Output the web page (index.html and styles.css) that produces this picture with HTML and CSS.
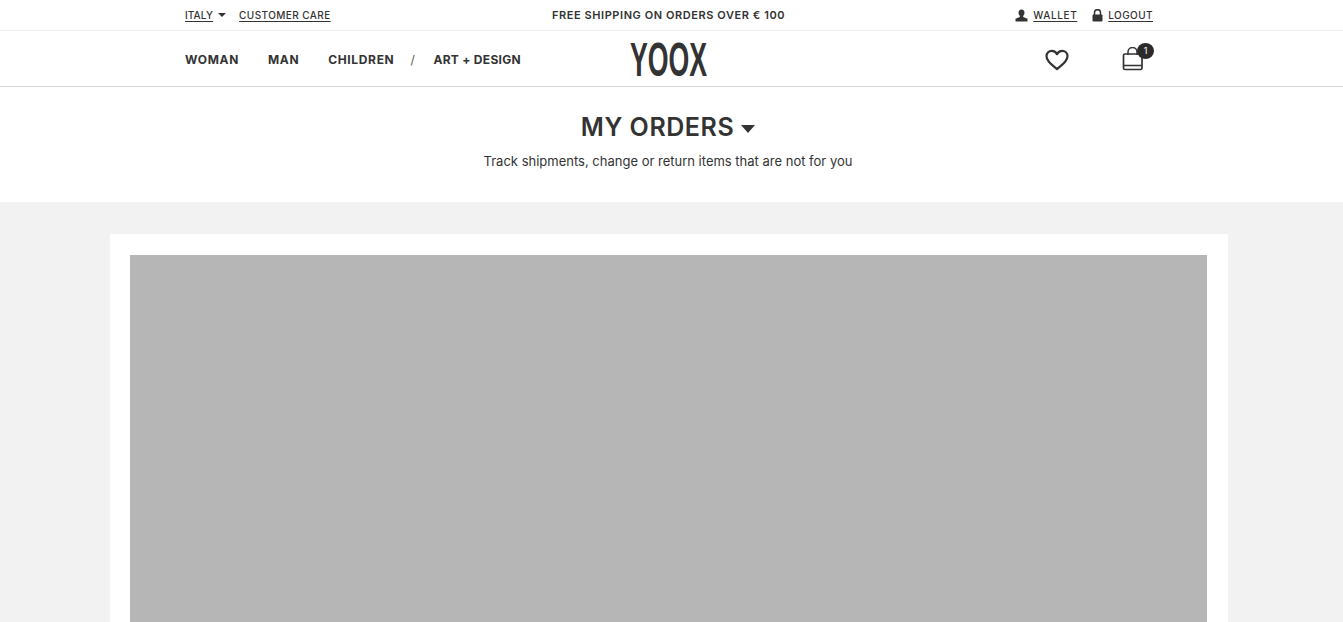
FILE: index.html
```html
<!DOCTYPE html>
<html lang="en">
<head>
<meta charset="utf-8">
<title>My Orders - YOOX</title>
<link rel="stylesheet" href="styles.css">
</head>
<body>
<div class="page">
<header class="site-header">
  <div class="top-bar">
    <div class="wrap top-inner">
      <div class="top-left">
        <a class="top-link" href="#">ITALY</a>
        <span class="caret-small"></span>
        <a class="top-link care" href="#">CUSTOMER CARE</a>
      </div>
      <div class="promo">FREE SHIPPING ON ORDERS OVER € 100</div>
      <div class="top-right">
        <svg class="mini-icon" width="13" height="13" viewBox="0 0 13 13"><path d="M6.500 0.500c-2 0-3 1.400-3 3.200 0 1.400.6 2.500 1.300 3.100v1.200L0.500 9.800V12.500h12V9.800L8.200 8V6.800c.7-.6 1.300-1.700 1.300-3.100 0-1.800-1-3.200-3-3.200z" fill="#333"/></svg>
        <a class="top-link wallet" href="#">WALLET</a>
        <svg class="mini-icon lock" width="11" height="13" viewBox="0 0 11 13"><path d="M2.500 6V3.700a3 3 0 0 1 6 0V6" fill="none" stroke="#333" stroke-width="1.500"/><rect x="0.500" y="5.500" width="10" height="7" rx="1" fill="#333"/></svg>
        <a class="top-link logout" href="#">LOGOUT</a>
      </div>
    </div>
  </div>
  <div class="main-bar">
    <div class="wrap main-inner">
      <nav class="main-nav">
        <a href="#">WOMAN</a>
        <a href="#">MAN</a>
        <a href="#">CHILDREN</a>
        <span class="slash">/</span>
        <a class="nav-art" href="#">ART + DESIGN</a>
      </nav>
      <a class="logo" href="#"><span class="logo-text">YOOX</span></a>
      <div class="main-icons">
        <svg class="heart" width="24" height="22" viewBox="0 0 24 22"><path d="M12 20.200C7 15.800 1.500 12.300 1.500 7.200 1.500 4 4 1.800 6.800 1.800 9 1.800 11 3 12 5.200 13 3 15 1.800 17.200 1.800 20 1.800 22.500 4 22.500 7.200 22.500 12.300 17 15.800 12 20.200z" fill="none" stroke="#333" stroke-width="2.200" stroke-linejoin="round"/></svg>
        <div class="bag">
          <svg width="21" height="24" viewBox="0 0 21 24"><path d="M6 8V5a4.500 4.500 0 0 1 9 0v3" fill="none" stroke="#333" stroke-width="1.500"/><rect x="1.500" y="7" width="18.500" height="15.500" rx="1.500" fill="none" stroke="#333" stroke-width="1.700"/><path d="M1.500 18.500h18.500" stroke="#333" stroke-width="1.500"/></svg>
          <span class="badge">1</span>
        </div>
      </div>
    </div>
  </div>
</header>
<section class="hero">
  <h1 class="hero-title">MY ORDERS <span class="caret-big"></span></h1>
  <p class="hero-sub">Track shipments, change or return items that are not for you</p>
</section>
<main class="content">
  <div class="card">
    <div class="placeholder"></div>
  </div>
</main>
</div>
</body>
</html>
```

FILE: styles.css
```css
* { box-sizing: border-box; }
html, body { margin: 0; height: 100%; overflow: hidden; }
body { background: #f2f2f2; font-family: Inter, "Liberation Sans", sans-serif; color: #333; }
a { color: inherit; text-decoration: none; }
.page { width: 1338px; }
.site-header, .hero { background: #fff; width: 1343px; }
.wrap { width: 968px; margin-left: 185px; }

.top-bar { height: 31px; border-bottom: 1px solid #f1f1f1; }
.top-inner { position: relative; display: flex; align-items: center; justify-content: space-between; height: 30px; }
.top-left, .top-right { display: flex; align-items: center; font-size: 10px; font-weight: 500; }
.top-link { text-decoration: underline; text-underline-offset: 2px; letter-spacing: 0.1px; }
.caret-small { width: 0; height: 0; margin: 0 5px; border-left: 4px solid transparent; border-right: 4px solid transparent; border-top: 4px solid #333; }
.top-link.care { margin-left: 8px; letter-spacing: 0.42px; }
.promo { position: absolute; left: 367px; font-size: 11px; font-weight: 600; letter-spacing: 0.57px; white-space: nowrap; }
.mini-icon { display: block; margin-right: 5px; }
.top-link.wallet { margin-right: 15px; letter-spacing: 0.6px; }
.top-link.logout { letter-spacing: 0.43px; }
.lock { margin-right: 5px; }

.main-bar { height: 56px; border-bottom: 1px solid #d6d6d6; }
.main-inner { position: relative; display: flex; align-items: center; justify-content: space-between; height: 57px; }
.main-nav { display: flex; align-items: center; font-size: 12px; font-weight: 700; letter-spacing: 0.65px; }
.main-nav a { margin-right: 29px; white-space: nowrap; }
.main-nav a:nth-of-type(3) { margin-right: 16px; }
.main-nav .slash { margin-right: 18px; font-weight: 400; color: #555; }
.main-nav .nav-art { letter-spacing: 0.3px; margin-right: 0; }
.logo { position: absolute; left: 445px; top: 9px; width: 78px; height: 38px; display: block; overflow: visible; }
.logo-text { display: block; font-family: "Liberation Sans", sans-serif; font-weight: 700; font-size: 49px; line-height: 38px; letter-spacing: 0; color: #333; white-space: nowrap; transform-origin: 0 50%; transform: scaleX(0.545); width: 150px; }
.main-icons { display: flex; align-items: center; margin-top: -2px; }
.heart { display: block; margin-top: 3px; margin-right: 53px; }
.bag { position: relative; width: 21px; height: 24px; margin-right: 10px; }
.bag svg { display: block; }
.badge { position: absolute; left: 15px; top: -4px; width: 17px; height: 16px; border-radius: 50%; background: #2b2b2b; color: #fff; font-size: 9px; line-height: 16px; text-align: center; }

.hero { height: 115px; display: flex; flex-direction: column; align-items: center; padding-right: 7px; }
.hero-title { margin: 24px 0 0; font-size: 25px; line-height: 32px; font-weight: 600; letter-spacing: 0.55px; display: flex; align-items: center; }
.caret-big { width: 0; height: 0; margin-left: 7px; margin-top: 4px; border-left: 7px solid transparent; border-right: 7px solid transparent; border-top: 8px solid #333; }
.hero-sub { margin: 8px 0 0; font-size: 13px; line-height: 20px; }

.content { padding: 32px 110px 0; }
.card { background: #fff; width: 1118px; padding: 21px 21px 0 20px; height: 388px; }
.placeholder { background: #b6b6b6; height: 367px; }
```
